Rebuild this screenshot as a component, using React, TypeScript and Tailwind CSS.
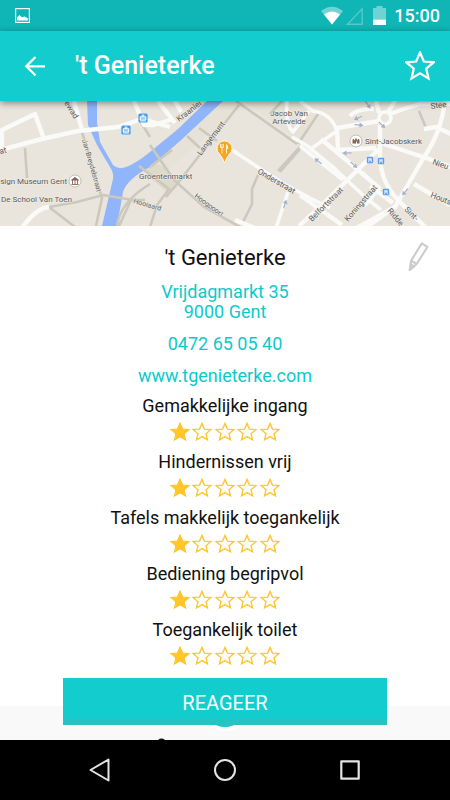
import React from "react";

const STAR =
  "M12 1.2l3.1 7.2 7.8.7-5.9 5.1 1.8 7.7L12 17.8l-6.8 4.1L7 14.2 1.1 9.1l7.8-.7z";

const ratings = [
  { label: "Gemakkelijke ingang", score: 1 },
  { label: "Hindernissen vrij", score: 1 },
  { label: "Tafels makkelijk toegankelijk", score: 1 },
  { label: "Bediening begripvol", score: 1 },
  { label: "Toegankelijk toilet", score: 1 },
];

function StatusBar() {
  return (
    <div className="flex h-[31px] items-center bg-[#10b5b5] pr-[10px] pl-[15px] text-white">
      <svg width="15" height="15" viewBox="0 0 15 15" aria-hidden="true">
        <rect x="0.6" y="0.6" width="13.8" height="13.8" fill="none" stroke="currentColor" strokeWidth="1.2" />
        <path d="M2 12.6V9.6L4.6 7l2.2 2.3L9.6 8.4l3.2 1.8v2.4z" fill="currentColor" />
      </svg>
      <svg className="ml-auto" width="65" height="20" viewBox="322 6 65 20" aria-hidden="true">
        <path d="M322 11q11-8.500 22 0L333 24.500z" fill="#70d3d3" />
        <path d="M325 14.500q8-6 16 0L333 24.500z" fill="#fff" />
        <path d="M348.500 24.200H363.200V8.800z" fill="none" stroke="#58c8c8" strokeWidth="1.400" />
        <path d="M374 8h3.500V6h6v2h3.500v11.500h-13z" fill="#70d3d3" />
        <path d="M374 19.500h13V25h-13z" fill="#fff" />
      </svg>
      <span className="ml-2 text-lg leading-none font-medium">15:00</span>
    </div>
  );
}

function AppBar() {
  return (
    <header className="relative z-10 flex h-[70px] items-center bg-[#12cccd] pr-[15px] pl-[23px] text-white shadow-[0_2px_7px_rgba(0,0,0,0.45)]">
      <button type="button" aria-label="Terug" className="flex h-8 w-6 items-center">
        <svg width="24" height="24" viewBox="0 0 24 24" fill="none" stroke="currentColor" strokeWidth="2.300" aria-hidden="true">
          <path d="M22 12.300H4M12.500 3L3.300 12.300l9.200 9.200" />
        </svg>
      </button>
      <h1 className="ml-7 text-[25px] leading-9 font-medium">'t Genieterke</h1>
      <button type="button" aria-label="Favoriet" className="ml-auto">
        <svg width="30" height="30" viewBox="0 0 24 24" fill="none" stroke="currentColor" strokeWidth="1.800" aria-hidden="true">
          <path d={STAR} />
        </svg>
      </button>
    </header>
  );
}

function BusStop({ x, y }: { x: number; y: number }) {
  return (
    <g transform={`translate(${x} ${y})`}>
      <rect x="-3.200" y="-3.200" width="6.400" height="6.400" rx="1.200" fill="#5c9df0" />
      <path d="M-1.800-1.800h3.600v2.600h-3.600z" fill="#d6e7ff" />
      <path d="M-1.800 1.700h1M.8 1.700h1" stroke="#fff" />
    </g>
  );
}

function TramStop({ x, y }: { x: number; y: number }) {
  return (
    <g transform={`translate(${x} ${y})`}>
      <rect x="-4.600" y="-4.600" width="9.200" height="9.200" rx="1.500" fill="#3f9cf0" />
      <path d="M-2.800-1.300h5.600V2h-5.600zM-1.500-2.900h3M0-3v2M-3 3h6" fill="#cfe6ff" stroke="#fff" strokeWidth="0.900" />
      <path d="M-1-1v2.800M1-1v2.800" stroke="#3f9cf0" strokeWidth="0.700" />
    </g>
  );
}

function Arrow({ x, y, angle }: { x: number; y: number; angle: number }) {
  return (
    <path
      transform={`translate(${x} ${y}) rotate(${angle})`}
      d="M-4.500-.6H.5V-2.500L4.500 0 .5 2.500V.6h-5z"
      fill="#a5b1cb"
    />
  );
}

function StreetMap() {
  return (
    <svg
      className="block h-[125px] w-full bg-[#e9e5dd]"
      viewBox="0 0 450 125"
      preserveAspectRatio="xMidYMid slice"
      role="img"
      aria-label="Kaart van Gent"
    >
      <path d="M0 0h450v125H0z" fill="#e9e5dd" />
      <path d="M133 62L175 32 208 0h92l14 15-14 26-55-40-88 78z" fill="#e6e2d7" />
      <path d="M150 60l14 6 16 14-12 12-22-19z" fill="#ddd9cb" />
      <path
        d="M87 0L88 24 97 44 110 66Q114 72 113 78L102 125H117L123 91Q127 78 150 66L180 40 223 0H207L178 28 150 51Q137 62 126 66Q118 69 113 64L100 41 97 21V0z"
        fill="#90b5fa"
      />
      <g fill="none" stroke="#cbc8bc" strokeWidth="2.600">
        <path d="M25 47l2 30M82 31l20 66-6 28M49 106l28-5 26-7 30 5h12M49 106l26 20M117 125q3-24 33-42M131 99l-12 26" />
        <path d="M150 44l24 35 30 27 36 20M139 65l30 23-12 16-7 22M150 66l22-17M239 4l-30 38-31 40-12 14M187 35l13 12M199 27l18 13M236 0l61 43M270 13l14-15M300 46l-22 24M258 74l-6 14v15l-9 18M320 10l-22 33" />
        <path d="M300 48l-20 23M419 10l7 17M139 18l11 18" />
      </g>
      <g fill="none" stroke="#fafaf8" strokeWidth="4.400" strokeLinejoin="round">
        <path d="M0 49L42 38 78 30 118 26 142 18 170 26M0 30l35-17 9 25M2 30v18M74 0l8 29M22 127q14-20 27-21M134 0l10 24 10 0 19-6M158 0l17 22M175 0l6 11" />
        <path d="M232 49l24 16 28 18 26 14 20 10M288 91l-12 36M287 0q-2 24 6 31l16-21M292 36l14 8 28 23 31 29 16 13M300 0l13 10q18 2 24 20l-28 19M300 45l43 34" strokeWidth="3.600" />
        <path d="M337 27l42-7M337 27l1 22 38-2M321 38l30 25 28 24M376 0l3 12M385 15q14-6 35-12h30M380 24v33q1 24 18 42l30 30M379 48l-56 55-24 22M381 42l48 16 22 8M445 0q-4 32-21 56l-29 50-44 24M300 94l42 30M395 106l-31 22M414 83l36 21M364 105l15-18-17-15M424 28l12-2 15 7M350 15q8-8 24-7M387 13l9-15" strokeWidth="4.400" />
        <path d="M235 119l20 8M370 85l23 17" />
      </g>
      <circle cx="385" cy="17" r="6" fill="#e9e5dd" stroke="#fafaf8" strokeWidth="3.600" />
      <Arrow x={368} y={4} angle={55} />
      <Arrow x={358} y={17} angle={158} />
      <Arrow x={359} y={24} angle={5} />
      <Arrow x={382} y={24} angle={45} />
      <Arrow x={347} y={52} angle={178} />
      <Arrow x={318} y={60} angle={217} />
      <Arrow x={354} y={64} angle={42} />
      <Arrow x={405} y={91} angle={130} />
      <Arrow x={285} y={103} angle={-72} />

      <TramStop x={143} y={17} />
      <TramStop x={126} y={29} />
      <BusStop x={370} y={59} />
      <BusStop x={381} y={60} />
      <BusStop x={386} y={91} />

      <g stroke="#aaa59b" strokeWidth="0.700">
        <circle cx="75" cy="80" r="6" fill="#fff" />
        <circle cx="356" cy="40" r="6" fill="#fff" />
      </g>
      <path d="M71.500 79L75 76.500 78.500 79zM72.500 79v4M75 79v4M77.500 79v4M71.500 83.500h7" fill="#896350" stroke="#896350" strokeWidth="0.900" />
      <path d="M352.500 42.500V39l1-1.500 1 1.500v1l1.500-3.500 1.500 3.500v-1l1-1.500 1 1.500v3.500h-2.500V40.500h-1v2z" fill="#896350" />

      <g
        className="font-[Roboto,sans-serif]"
        fontSize="8"
        fill="#5a5a5a"
        stroke="#f1eee8"
        strokeWidth="1"
        strokeLinejoin="round"
        paintOrder="stroke"
      >
        <text x="67" y="83" textAnchor="end">sign Museum Gent</text>
        <text x="1" y="101">De School Van Toen</text>
        <text x="0" y="53" transform="rotate(-12 0 53)">at</text>
        <text x="64" y="2" transform="rotate(58 64 2)">ewad</text>
        <text x="82" y="39" fontSize="7" transform="rotate(74 82 39)">Jan Breydelstraat</text>
        <text x="139" y="78">Groentenmarkt</text>
        <text x="133" y="102" fontSize="7" transform="rotate(16 133 102)">Hooiaard</text>
        <text x="179" y="21" transform="rotate(-37 179 21)">Kraanlei</text>
        <text x="201" y="55" transform="rotate(-53 201 55)">Langemunt</text>
        <text x="194" y="96" fontSize="7" transform="rotate(36 194 96)">Hoogpoort</text>
        <text x="257" y="72" transform="rotate(30 257 72)">Onderstraat</text>
        <text x="289" y="15" textAnchor="middle">
          <tspan x="289">Jacob Van</tspan>
          <tspan x="289" dy="8">Artevelde</tspan>
        </text>
        <text x="365" y="43">Sint-Jacobskerk</text>
        <text x="431" y="8" transform="rotate(-8 431 8)">Stee</text>
        <text x="432" y="63" transform="rotate(20 432 63)">Nieu</text>
        <text x="430" y="96" transform="rotate(22 430 96)">Houts</text>
        <text x="312" y="121" transform="rotate(-45 312 121)">Belfortstraat</text>
        <text x="348" y="121" transform="rotate(-49 348 121)">Koningstraat</text>
        <text x="387" y="110" transform="rotate(50 387 110)">Ridde</text>
        <text x="404" y="109" transform="rotate(45 404 109)">Sint-</text>
      </g>

      <path d="M224.500 62q-1.500-5-5-9a7.500 7.500 0 1 1 10 0q-3.500 4-5 9z" fill="#faa51e" stroke="#fff" strokeWidth="0.800" />
      <path d="M220.500 43v3.500h3V43M222 43v9.500" fill="none" stroke="#fff4dc" strokeWidth="0.900" />
      <path d="M226 43q2.500 1 2.200 5H227v4.500h-1z" fill="#fff4dc" />
    </svg>
  );
}

function Rating({ label, score }: { label: string; score: number }) {
  return (
    <li className="flex h-14 flex-col items-center">
      <span className="leading-6">{label}</span>
      <span role="img" aria-label={`${score} van 5 sterren`} className="mt-1 flex w-[110px] justify-between">
        {[1, 2, 3, 4, 5].map((n) => (
          <svg
            key={n}
            width="20"
            height="20"
            viewBox="-0.500 -0.500 25 25"
            fill={n <= score ? "#ffc72c" : "none"}
            stroke="#ffc72c"
            strokeWidth="1.700"
            aria-hidden="true"
          >
            <path d={STAR} />
          </svg>
        ))}
      </span>
    </li>
  );
}

function Details() {
  return (
    <main className="relative flex flex-1 flex-col items-center px-4 pt-4 text-center text-lg text-[#111]">
      <button type="button" aria-label="Bewerken" className="absolute top-4 right-5">
        <svg width="22" height="29" viewBox="0 0 22 31" fill="none" stroke="#cccccc" strokeWidth="2.300" strokeLinejoin="round" aria-hidden="true">
          <path d="M14 1.500l6 3.800L8.500 23.500 1.500 29l1-9z" />
          <path d="M2.500 20l6 3.500" />
          <path d="M2.300 24L1 30l5-4z" fill="#cccccc" />
        </svg>
      </button>
      <h2 className="text-[22px] leading-8">'t Genieterke</h2>
      <address className="mt-2 flex flex-col gap-3 leading-5 text-[#0ccaca] not-italic">
        <a href="#adres">
          Vrijdagmarkt 35
          <br />
          9000 Gent
        </a>
        <a href="tel:0472650540">0472 65 05 40</a>
        <a href="#website">www.tgenieterke.com</a>
      </address>
      <ul className="mt-2">
        {ratings.map((r) => (
          <Rating key={r.label} {...r} />
        ))}
      </ul>
    </main>
  );
}

function ActionArea() {
  return (
    <section className="relative h-[34px] bg-[#f9f9f9] px-[63px]">
      <svg className="absolute bottom-0 left-1/2 -translate-x-1/2" width="140" height="34" viewBox="0 0 140 34" aria-hidden="true">
        <circle cx="70" cy="0" r="25" fill="#fff" />
        <circle cx="70" cy="0" r="21" fill="#12cccd" />
        <ellipse cx="6.500" cy="37" rx="4.500" ry="4.500" fill="#111" />
      </svg>
      <button
        type="button"
        className="relative -mt-7 flex h-[47px] w-full items-center justify-center border-b-[6px] border-[#27c3c3] bg-[#12cccd] pt-2 text-xl text-white"
      >
        REAGEER
      </button>
    </section>
  );
}

function SystemNav() {
  const button = "flex h-8 w-8 items-center justify-center";
  return (
    <nav aria-label="Systeem" className="flex h-[60px] items-center justify-center gap-[93px] bg-black text-[#e4e4e4]">
      <button type="button" aria-label="Vorige" className={button}>
        <svg width="24" height="26" viewBox="0 0 24 26" fill="none" stroke="currentColor" strokeWidth="2" strokeLinejoin="round" aria-hidden="true">
          <path d="M20.500 2.500v21L2.500 13z" />
        </svg>
      </button>
      <button type="button" aria-label="Startscherm" className={button}>
        <svg width="24" height="24" viewBox="0 0 24 24" fill="none" stroke="currentColor" strokeWidth="2" aria-hidden="true">
          <circle cx="12" cy="12" r="10" />
        </svg>
      </button>
      <button type="button" aria-label="Recente apps" className={button}>
        <svg width="20" height="20" viewBox="0 0 20 20" fill="none" stroke="currentColor" strokeWidth="2.200" strokeLinejoin="round" aria-hidden="true">
          <path d="M1.300 1.300h17.400v17.400H1.300z" />
        </svg>
      </button>
    </nav>
  );
}

export default function App() {
  return (
    <div className="flex min-h-screen flex-col bg-white font-[Roboto,sans-serif]">
      <StatusBar />
      <AppBar />
      <StreetMap />
      <Details />
      <ActionArea />
      <SystemNav />
    </div>
  );
}
